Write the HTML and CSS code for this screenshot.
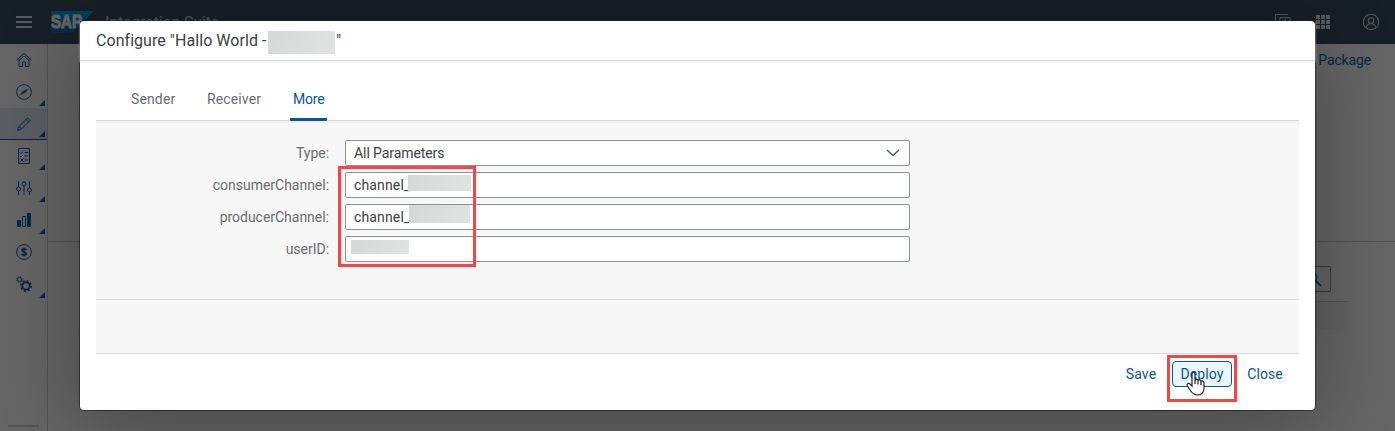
FILE: index.html
```html
<!DOCTYPE html>
<html lang="en">
<head>
<meta charset="utf-8">
<title>Integration Suite</title>
<link rel="stylesheet" href="styles.css">
</head>
<body>
<div class="app">
  <header class="shell">
    <svg class="burger" width="16" height="14" viewBox="0 0 16 14"><path d="M0 2h16M0 7h16M0 12h16"/></svg>
    <svg class="logo" width="43" height="22" viewBox="0 0 43 22"><defs><linearGradient id="lg" x1="0" y1="0" x2="0" y2="1"><stop offset="0" stop-color="#00aeef"/><stop offset="1" stop-color="#1f5fbb"/></linearGradient></defs><path d="M0 0h43L21 22H0z" fill="url(#lg)" stroke="none"/><text x="0" y="17" textLength="31" lengthAdjust="spacingAndGlyphs">SAP</text></svg>
    <span class="product">Integration Suite</span>
    <div class="tools">
      <svg width="16" height="16" viewBox="0 0 16 16"><path d="M13 .5H.5V13H5M5 3.500h10v10H5zM7.500 7l3-1.500v6"/></svg>
      <svg class="grid" width="16" height="16" viewBox="0 0 16 16"><path d="M1 1h4v4H1zM6 1h4v4H6zM11 1h4v4h-4zM1 6h4v4H1zM6 6h4v4H6zM11 6h4v4h-4zM1 11h4v4H1zM6 11h4v4H6zM11 11h4v4h-4z"/></svg>
      <svg width="16" height="16" viewBox="0 0 16 16"><circle cx="8" cy="8" r="7.400"/><circle cx="8" cy="6.500" r="2.600"/><path d="M3.500 13.500C4 8.300 12 8.300 12.500 13.500"/></svg>
    </div>
  </header>
  <div class="body">
    <nav class="side">
      <a class="item"><svg viewBox="0 0 16 16"><path d="M.5 8L8 1.500 15.500 8M3 7v7.500h3.500v-4.500h3v4.500H13V7M8 4L3 8.300M8 4l5 4.300"/></svg></a>
      <a class="item more"><svg viewBox="0 0 16 16"><circle cx="8" cy="8" r="7.400"/><path class="needle" d="M12.500 4.500L9 9 3.500 11.500 7 7z"/></svg></a>
      <a class="item more active"><svg viewBox="0 0 16 16"><path d="M1.500 14.500L3 10.500 11.500 2l2.500 2.500L5.500 13zM10 3.500L12.500 6M3 10.500L5.500 13"/></svg></a>
      <a class="item more"><svg viewBox="0 0 16 16"><path d="M2.500.5h11v15h-11zM8.500 4.500h3.500M8.500 8h3.500M8.500 12h3.500M4 4.500l1 1 2-2M4 8l1 1 2-2M4.500 10.500l3 3M7.500 10.500l-3 3"/></svg></a>
      <a class="item more"><svg viewBox="0 0 16 16"><path d="M2.500 1v6M2.500 11v4M8 1v1M8 6v9M13.500 1v7M13.500 12v3"/><circle cx="2.500" cy="9" r="2"/><circle cx="8" cy="4" r="2"/><circle cx="13.500" cy="10" r="2"/></svg></a>
      <a class="item more"><svg viewBox="0 0 16 16"><path class="fill" d="M1.500 8.500h3v6h-3zM11.500 1.500h3v13h-3z"/><path d="M6.500 4.500h3v10h-3z"/></svg></a>
      <a class="item"><svg viewBox="0 0 16 16"><circle cx="8" cy="8" r="7.400"/><path class="bold" d="M10.300 6C9.500 4.500 6 4.600 6 6.300 6 8.300 10.200 7.500 10.200 9.700 10.200 11.500 6.500 11.500 5.700 10"/><path d="M8 3.500v9"/></svg></a>
      <a class="item more"><svg viewBox="0 0 16 16"><circle class="heavy" cx="10" cy="10" r="3.700"/><circle class="teeth" cx="10" cy="10" r="5.200"/><circle cx="3.500" cy="3.500" r="2"/><circle class="teeth small" cx="3.500" cy="3.500" r="2.900"/></svg></a>
      <span class="handle"></span>
    </nav>
    <main class="page">
      <section class="summary"><a>Package</a></section>
      <section class="table">
        <div class="search"><svg width="16" height="16" viewBox="0 0 16 16"><circle cx="6.500" cy="6" r="4.500"/><path class="bold" d="M9.500 9.500L15 15"/></svg></div>
        <div class="thead"></div>
      </section>
    </main>
  </div>
</div>
<div class="overlay"></div>

<div class="dialog">
  <div class="title"><span>Configure "Hallo World -</span><i class="mask"></i><span>"</span></div>
  <div class="tabs"><span class="tab sender">Sender</span><span class="tab receiver">Receiver</span><span class="tab selected">More</span></div>
  <div class="form">
    <label>Type:</label><div class="field select"><span>All Parameters</span><svg width="14" height="8" viewBox="0 0 14 8"><path d="M1 1l6 5.500L13 1"/></svg></div>
    <label>consumerChannel:</label><div class="field"><span class="value">channel_</span><i class="mask m1"></i></div>
    <label>producerChannel:</label><div class="field"><span class="value">channel_</span><i class="mask m2"></i></div>
    <label>userID:</label><div class="field"><i class="mask m3"></i></div>
  </div>
  <div class="blank"></div>
  <footer class="actions"><button class="save">Save</button><button class="deploy">Deploy</button><button class="close">Close</button></footer>
</div>

<div class="highlight fields"></div>
<div class="highlight button"></div>
<svg class="cursor" width="20" height="25" viewBox="0 0 20 25"><path d="M6 15V3.200C6 .4 9 .4 9 3.200V9C9.500 7.500 12 7.800 12 9.800 12.500 8.300 15 8.800 15 10.500 15.800 9.500 18 10 18 11.800V17C18 21 15.500 24 11.500 24 7.500 24 5.500 21.500 3.800 18.500L1.500 15C.2 12.800 2.500 11.800 4 13z"/><path d="M9 9v4M12 10v3.500M15 11v3"/></svg>
</body>
</html>
```
FILE: styles.css
```css
* { box-sizing: border-box; }
body { margin: 0; width: 1395px; height: 431px; overflow: hidden; position: relative; font-family: Roboto, "Noto Sans", sans-serif; font-size: 14px; color: #3c4044; }
svg { fill: none; stroke: currentColor; stroke-width: 1; flex: none; }
.app { display: flex; flex-direction: column; height: 431px; background: #fcfcfc; }
.shell { display: flex; height: 44px; flex: none; background: #3b4e60; color: #d1e0ee; align-items: center; padding: 0 16px; }
.burger { stroke-width: 2; }
.logo { margin-left: 19px; }
.logo text { font: 700 19px "Liberation Sans", sans-serif; fill: #fff; stroke: #fff; }
.product { margin-left: 11px; font-size: 16px; letter-spacing: -.15px; }
.tools { margin-left: auto; display: flex; gap: 24px; }
.tools svg:last-child { margin-left: 8px; transform: scale(1.05); }
.grid { fill: currentColor; stroke: none; }
.body { display: flex; flex: 1; }
.side { width: 48px; border-right: 1px solid #cfcfcf; color: #1560b0; display: flex; flex-direction: column; }
.item { height: 32px; display: flex; align-items: center; justify-content: center; position: relative; flex: none; }
.item svg { width: 16px; height: 16px; }
.more::after { content: ""; position: absolute; right: 2px; bottom: 2px; border-left: 6px solid transparent; border-bottom: 6px solid #1560b0; }
.active { background: #e0ecf8; border-bottom: 1px solid #0a57a5; }
.fill { fill: currentColor; }
.needle { fill: currentColor; stroke: none; }
.bold { stroke-width: 1.7; }
.heavy { stroke-width: 2; }
.teeth { stroke-width: 1.5; stroke-dasharray: 2 2.08; }
.small { stroke-width: 1; stroke-dasharray: 1.1 1.18; }
.handle { width: 31px; height: 2px; margin: auto 8px 4px; background: #cfcfcf; }
.page { flex: 1; display: flex; flex-direction: column; }
.summary { height: 198px; border-bottom: 1px solid #cfcfcf; padding: 8px 24px; text-align: right; color: #1560b0; letter-spacing: -.15px; }
.table { margin: 24px 47px 0 48px; display: flex; flex-direction: column; }
.search { width: 220px; height: 26px; border: 1px solid #89919a; border-radius: 2px; margin: 0 17px 9px auto; padding: 4px 8px; text-align: right; color: #0a57a5; }
.thead { height: 28px; border-top: 1px solid #cfcfcf; background: #f6f6f6; }
.overlay { position: absolute; inset: 0; background: rgba(0,0,0,.6); }
.dialog { position: absolute; left: 80px; top: 21px; width: 1235px; height: 389px; background: #fff; border-radius: 4px; box-shadow: 0 0 0 1px rgba(0,0,0,.45), 0 10px 80px rgba(0,0,0,.33); display: flex; flex-direction: column; }
.title { height: 40px; flex: none; padding-left: 16px; border-bottom: 1px solid #d9d9d9; box-shadow: 0 1px 2px #eee; display: flex; align-items: center; font-size: 16px; white-space: pre; }
.title span:first-child { width: 172px; letter-spacing: .05px; }
.mask { background: linear-gradient(110deg, #d6d8d8, #e1e3e2); flex: none; }
.title .mask { width: 67px; height: 23px; margin-top: 3px; margin-right: 1px; }
.tabs { height: 60px; flex: none; margin: 0 16px; padding-left: 35px; border-bottom: 1px solid #d9d9d9; display: flex; color: #6a6d70; line-height: 77px; letter-spacing: .13px; }
.sender { width: 76px; }
.receiver { width: 83px; }
.selected { color: #0854a0; width: 37px; height: 60px; padding-left: 3px; letter-spacing: -.2px; border-bottom: 3px solid #0854a0; border-radius: 1px; }
.form { height: 179px; flex: none; margin: 0 16px; padding-top: 19px; background: #f7f7f7; border-bottom: 1px solid #d9d9d9; box-shadow: inset 0 3px 3px -2px #ececec; display: grid; grid-template-columns: 233px 565px; grid-auto-rows: 26px; gap: 6px 16px; align-items: center; }
.form label { text-align: right; color: #6a6d70; letter-spacing: -.02px; }
.field { height: 26px; background: #fff; border: 1px solid #89919a; border-radius: 2px; display: flex; align-items: center; padding: 0 9px 0 8px; letter-spacing: -.08px; }
.value { width: 54px; letter-spacing: .15px; }
.select { justify-content: space-between; }
.select svg { color: #0854a0; stroke-width: 1.2; }
.m1 { width: 63px; height: 16px; margin-top: -4px; }
.m2 { width: 61px; height: 18px; margin-top: -6px; margin-left: 1px; }
.m3 { width: 58px; height: 14px; margin: -4px 0 0 -3px; }
.blank { height: 54px; flex: none; margin: 0 16px; background: #f7f7f7; border-bottom: 1px solid #d9d9d9; }
.actions { display: flex; padding: 7px 26px 0 0; justify-content: flex-end; }
button { height: 26px; border: 1px solid transparent; border-radius: 4px; background: none; color: #0854a0; font: inherit; letter-spacing: .1px; padding: 0; }
.save { width: 48px; margin-right: 7px; }
.deploy { width: 60px; border-color: #0854a0; background: #ebf5fe; }
.close { width: 48px; margin-left: 9px; }
.highlight { position: absolute; border: 3px solid #fc4343; }
.fields { left: 338px; top: 166px; width: 138px; height: 101px; }
.button { left: 1167px; top: 355px; width: 70px; height: 47px; }
.cursor { position: absolute; left: 1186px; top: 371px; fill: #fff; stroke: #20242c; stroke-width: 1.2; }
```
